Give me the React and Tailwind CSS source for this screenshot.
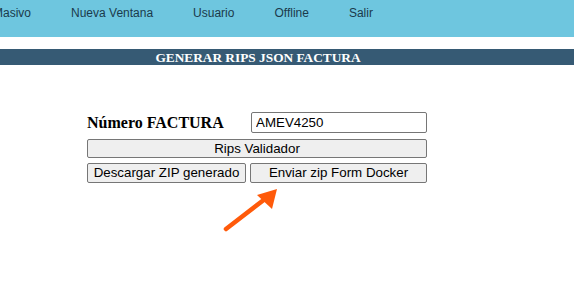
export default function App() {
    const navItems = ["Masivo", "Nueva Ventana", "Usuario", "Offline", "Salir"];

    return (
        <div className="relative w-[574px] h-[307px] overflow-hidden bg-white font-['Liberation_Sans',Arial,sans-serif]">
            {/* Menu bar */}
            <nav className="h-[37px] bg-[#6ec6df] flex items-start gap-[40px] ml-[-7px] pt-[5px] text-[12px] text-[#1b3a4b]">
                {navItems.map((item) => (
                    <span key={item} className="leading-[16px] whitespace-nowrap">{item}</span>
                ))}
            </nav>

            {/* Title bar */}
            <div className="mt-[12px] h-[16px] bg-[#365a74] pr-[58px] text-center leading-[16px]">
                <span className="text-white font-bold text-[13.33px] leading-[16px] font-['Liberation_Serif','Times_New_Roman',serif]">
                    GENERAR RIPS JSON FACTURA
                </span>
            </div>

            {/* Form */}
            <div className="mt-[47px] ml-[87px] w-[340px] flex flex-col">
                <div className="flex items-center justify-between h-[21px]">
                    <label className="font-bold text-[16px] text-black font-['Liberation_Serif','Times_New_Roman',serif]">
                        Número FACTURA
                    </label>
                    <input
                        readOnly
                        value="AMEV4250"
                        className="w-[176px] h-[21px] border border-[#767676] rounded-[2px] px-[4px] text-[13.33px] text-black outline-none"
                    />
                </div>
                <button className="mt-[6px] h-[19px] w-full bg-[#efefef] border border-[#767676] rounded-[2px] text-[13.33px] text-black leading-none">
                    Rips Validador
                </button>
                <div className="mt-[5px] flex gap-[4px]">
                    <button className="h-[20px] w-[159px] bg-[#efefef] border border-[#767676] rounded-[2px] text-[13.33px] text-black leading-none">
                        Descargar ZIP generado
                    </button>
                    <button className="h-[20px] flex-1 bg-[#efefef] border border-[#767676] rounded-[2px] text-[13.33px] text-black leading-none">
                        Enviar zip Form Docker
                    </button>
                </div>
            </div>

            {/* Annotation arrow */}
            <svg className="absolute left-[215px] top-[182px]" width="70" height="55" viewBox="0 0 70 55">
                <line x1="11" y1="47" x2="50" y2="17" stroke="#ff5a0a" strokeWidth="4.5" strokeLinecap="round" />
                <polygon points="62,7 57,27 42,13" fill="#ff5a0a" />
            </svg>
        </div>
    );
}
